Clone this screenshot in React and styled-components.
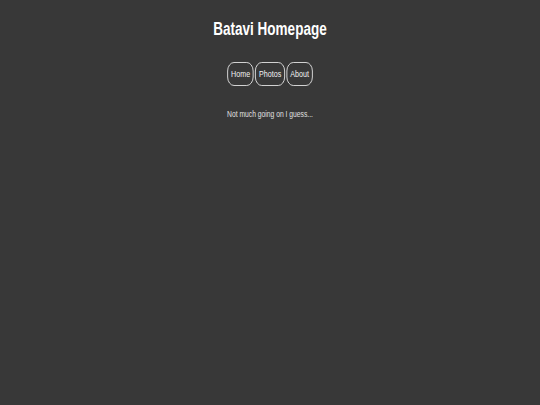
import styled, { createGlobalStyle } from 'styled-components';

const GlobalStyle = createGlobalStyle`
	html, body {
		margin: 0;
		padding: 0;
		background-color: #383838;
	}
	body {
		font-family: 'Liberation Sans', Arial, sans-serif;
		color: #eeeeee;
		overflow: hidden;
	}
`;

// the page is drawn at 720px wide and squeezed to the 540px window
const Viewport = styled.div`
	width: 540px;
	height: 405px;
	overflow: hidden;
`;

const Stage = styled.main`
	width: 720px;
	height: 405px;
	transform: scaleX(0.75);
	transform-origin: 0 0;
	display: flex;
	flex-direction: column;
	align-items: center;
	padding-top: 19px;
	box-sizing: border-box;
`;

const Title = styled.h1`
	margin: 0;
	font-size: 18px;
	font-weight: 700;
	color: #ffffff;
`;

const Nav = styled.nav`
	display: flex;
	gap: 2px;
	margin-top: 22px;
`;

const NavButton = styled.a`
	display: block;
	padding: 5px 4px;
	border: 1.5px solid #e8e8e8;
	border-radius: 9px;
	font-size: 9.5px;
	line-height: 11.5px;
	color: #f2f2f2;
	text-decoration: none;
	cursor: pointer;
`;

const Message = styled.p`
	margin: 23px 0 0;
	font-size: 9px;
	color: #e0e0e0;
`;

const links = ['Home', 'Photos', 'About'];

export default function App() {
	return (
		<>
			<GlobalStyle />
			<Viewport>
				<Stage>
					<Title>Batavi Homepage</Title>
					<Nav>
						{links.map((label) => (
							<NavButton key={label}>{label}</NavButton>
						))}
					</Nav>
					<Message>Not much going on I guess...</Message>
				</Stage>
			</Viewport>
		</>
	);
}
